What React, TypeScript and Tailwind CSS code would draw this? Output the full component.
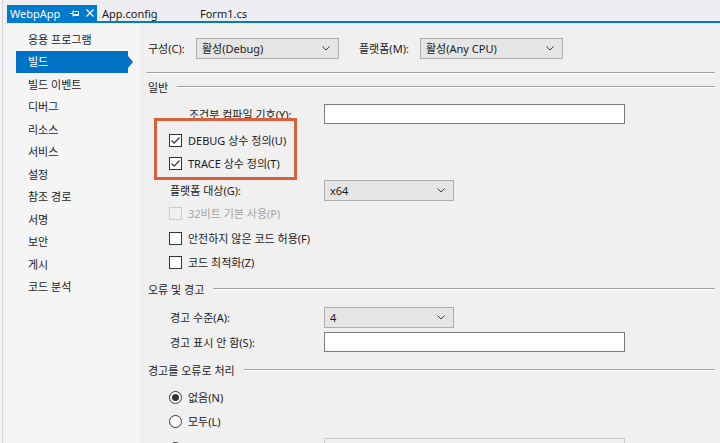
import React from "react";

const Chevron = () => (
  <svg width="8" height="5" viewBox="0 0 8 5">
    <path d="M0.5 0.5 L4 4 L7.5 0.5" fill="none" stroke="#3c3c3c" strokeWidth="1" />
  </svg>
);

const Dropdown = ({ text, w }: { text: string; w: string }) => (
  <div className={`${w} h-[21px] border border-[#acacac] bg-[#e5e5e5] flex items-center justify-between pl-[5px] pr-[8px]`}>
    <span>{text}</span>
    <Chevron />
  </div>
);

const Input = () => <div className="w-[301px] h-[20px] bg-white border border-[#7a7a7a]" />;

const Check = ({ checked, disabled }: { checked?: boolean; disabled?: boolean }) => (
  <div
    className={
      disabled
        ? "w-[13px] h-[13px] border border-[#cccccc] bg-[#f0f0f0]"
        : "w-[13px] h-[13px] border border-[#333333] bg-white flex items-center justify-center"
    }
  >
    {checked && (
      <svg width="11" height="11" viewBox="0 0 11 11">
        <path d="M1.5 5.5 L4.2 8.2 L9.5 2.5" fill="none" stroke="#333333" strokeWidth="1.2" />
      </svg>
    )}
  </div>
);

const Radio = ({ on }: { on?: boolean }) => (
  <div className="w-[13px] h-[13px] rounded-full border border-[#333333] bg-white flex items-center justify-center">
    {on && <div className="w-[7px] h-[7px] rounded-full bg-[#333333]" />}
  </div>
);

const Header = ({ text, mt }: { text: string; mt: string }) => (
  <div className={`${mt} shrink-0 h-[16px] flex items-center pl-[8px] pr-[5px]`}>
    <span>{text}</span>
    <div className="flex-1 ml-[9px] h-[2px] border-t border-t-[#a0a0a0] border-b border-b-white" />
  </div>
);

const navItems = [
  "응용 프로그램",
  "빌드",
  "빌드 이벤트",
  "디버그",
  "리소스",
  "서비스",
  "설정",
  "참조 경로",
  "서명",
  "보안",
  "게시",
  "코드 분석",
];

export default function App() {
  return (
    <div className="w-[720px] h-[443px] overflow-hidden flex bg-[#eeeef2] text-[11px] text-[#1b1b1b] font-['Noto_Sans','Noto_Sans_CJK_KR',sans-serif] leading-none">
      {/* left strip */}
      <div className="w-[7px] h-full flex shrink-0">
        <div className="w-[2px] bg-[#f3f3f6]" />
        <div className="w-px bg-[#d6d6dc]" />
        <div className="flex-1 bg-[#f0f0f3]" />
      </div>

      <div className="flex-1 flex flex-col min-w-0">
        {/* tab bar */}
        <div className="h-[21px] shrink-0 flex items-end">
          <div className="w-[90px] h-[16px] bg-[#007acc] text-white flex items-center pl-[3px]">
            <span>WebpApp</span>
            <svg className="ml-[10px]" width="9" height="9" viewBox="0 0 9 9">
              <path d="M0 4.5 H3 M3 1.5 V7.5 M3 2.5 H8.5 V6.5 H3 M3 5.5 H8.5" fill="none" stroke="white" strokeWidth="1" />
            </svg>
            <svg className="ml-[7px]" width="8" height="8" viewBox="0 0 8 8">
              <path d="M0.5 0.5 L7.5 7.5 M7.5 0.5 L0.5 7.5" fill="none" stroke="white" strokeWidth="1.3" />
            </svg>
          </div>
          <div className="w-[98px] h-[16px] flex items-center pl-[5px]">App.config</div>
          <div className="h-[16px] flex items-center pl-[5px]">Form1.cs</div>
        </div>
        <div className="h-[2px] shrink-0 bg-[#007acc]" />

        <div className="flex-1 flex min-h-0">
          {/* nav */}
          <div className="w-[133px] shrink-0 bg-[#f5f5f5] pt-[5px] flex flex-col">
            {navItems.map((t, i) =>
              i === 1 ? (
                <div key={t} className="h-[22.5px] shrink-0 ml-[9px] w-[112px] bg-[#0072c6] text-white relative flex items-center pl-[12px]">
                  {t}
                  <div className="absolute right-[-5px] top-1/2 -translate-y-1/2 w-0 h-0 border-y-[6px] border-y-transparent border-l-[5px] border-l-[#0072c6]" />
                </div>
              ) : (
                <div key={t} className="h-[22.5px] shrink-0 ml-[9px] flex items-center pl-[12px]">
                  {t}
                </div>
              )
            )}
          </div>

          {/* content */}
          <div className="flex-1 bg-[#f0f0f0] relative flex flex-col overflow-hidden">
            <div className="mt-[15px] shrink-0 h-[21px] flex items-center pl-[8px]">
              <span className="w-[48px]">구성(C):</span>
              <Dropdown text="활성(Debug)" w="w-[143px]" />
              <span className="ml-[20px] w-[61px]">플랫폼(M):</span>
              <Dropdown text="활성(Any CPU)" w="w-[143px]" />
            </div>
            <div className="mt-[13px] shrink-0 ml-[6px] mr-[5px] h-[2px] border-t border-t-[#a0a0a0] border-b border-b-white" />

            <Header text="일반" mt="mt-[5px]" />
            <div className="mt-[9px] shrink-0 h-[20px] flex items-center">
              <span className="w-[184px] pl-[49px]">조건부 컴파일 기호(Y):</span>
              <Input />
            </div>
            <div className="mt-[5px] shrink-0 h-[22px] flex items-center pl-[29px] gap-[6px]">
              <Check checked />
              <span>DEBUG 상수 정의(U)</span>
            </div>
            <div className="mt-[1px] shrink-0 h-[22px] flex items-center pl-[29px] gap-[6px]">
              <Check checked />
              <span>TRACE 상수 정의(T)</span>
            </div>
            <div className="mt-[6px] shrink-0 h-[20px] flex items-center">
              <span className="w-[184px] pl-[30px]">플랫폼 대상(G):</span>
              <Dropdown text="x64" w="w-[130px]" />
            </div>
            <div className="mt-[2px] shrink-0 h-[22px] flex items-center pl-[29px] gap-[6px] text-[#a6a6a6]">
              <Check disabled />
              <span>32비트 기본 사용(P)</span>
            </div>
            <div className="mt-[3px] shrink-0 h-[22px] flex items-center pl-[29px] gap-[6px]">
              <Check />
              <span>안전하지 않은 코드 허용(F)</span>
            </div>
            <div className="mt-[2px] shrink-0 h-[22px] flex items-center pl-[29px] gap-[6px]">
              <Check />
              <span>코드 최적화(Z)</span>
            </div>

            <Header text="오류 및 경고" mt="mt-[8px]" />
            <div className="mt-[10px] shrink-0 h-[20px] flex items-center">
              <span className="w-[184px] pl-[30px]">경고 수준(A):</span>
              <Dropdown text="4" w="w-[130px]" />
            </div>
            <div className="mt-[5px] shrink-0 h-[20px] flex items-center">
              <span className="w-[184px] pl-[30px]">경고 표시 안 함(S):</span>
              <Input />
            </div>

            <Header text="경고를 오류로 처리" mt="mt-[10px]" />
            <div className="mt-[8px] shrink-0 h-[22px] flex items-center pl-[29px] gap-[6px]">
              <Radio on />
              <span>없음(N)</span>
            </div>
            <div className="mt-[2px] shrink-0 h-[22px] flex items-center pl-[29px] gap-[6px]">
              <Radio />
              <span>모두(L)</span>
            </div>
            <div className="mt-[6px] shrink-0 h-[20px] flex items-center">
              <div className="w-[184px] pl-[29px] flex items-center gap-[6px]">
                <Radio />
                <span>특정 경고(I):</span>
              </div>
              <div className="w-[301px] h-[20px] bg-[#f0f0f0] border border-[#cccccc]" />
            </div>

            {/* annotation box */}
            <div className="absolute left-[14px] top-[95px] w-[143px] h-[62px] border-[3px] border-[#d8603a]" />
          </div>
        </div>
      </div>
    </div>
  );
}
